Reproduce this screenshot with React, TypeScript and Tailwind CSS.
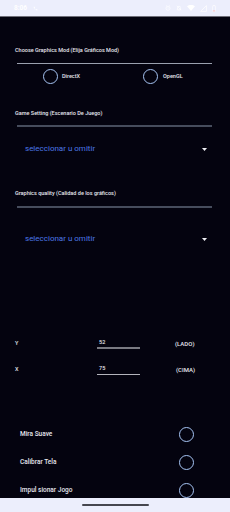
import React from "react";

const Circle = () => (
  <div className="w-[15px] h-[15px] rounded-full border-[1.5px] border-[#a6c4f4] shrink-0" />
);

const Heading = ({ children, mt }: { children: React.ReactNode; mt: string }) => (
  <div className={`${mt} pl-[15px] h-[8px] leading-[8px] text-[5.5px] font-medium text-[#e6e6ee]`}>{children}</div>
);

const Select = ({ mt }: { mt: string }) => (
  <div className={`${mt} h-[12px] flex items-center pl-[25px] pr-[23px] justify-between`}>
    <span className="text-[8px] leading-[12px] text-[#4c78e6]">seleccionar u omitir</span>
    <svg width="5" height="3" viewBox="0 0 5 3">
      <polygon points="0,0 5,0 2.5,3" fill="#f0f0f4" />
    </svg>
  </div>
);

export default function App() {
  return (
    <div
      className="w-[230px] h-[512px] flex flex-col overflow-hidden bg-[#04030f]"
      style={{ fontFamily: "Roboto, 'Noto Sans', sans-serif" }}
    >
      {/* status bar */}
      <div className="h-[17px] shrink-0 bg-[#eceefc] border-b border-[#6e6e78] flex items-center justify-between pl-[14px] pr-[14px]">
        <div className="flex items-center gap-[6px]">
          <span className="text-[6.5px] font-bold text-white leading-none">8:06</span>
          <svg width="5" height="5" viewBox="0 0 24 24">
            <path d="M6.6 10.8c1.4 2.8 3.8 5.1 6.6 6.6l2.2-2.2c.3-.3.7-.4 1-.2 1.1.4 2.3.6 3.6.6.6 0 1 .4 1 1V20c0 .6-.4 1-1 1C10.6 21 3 13.4 3 4c0-.6.4-1 1-1h3.5c.6 0 1 .4 1 1 0 1.3.2 2.5.6 3.6.1.3 0 .7-.2 1L6.6 10.8z" fill="#ffffff" />
          </svg>
        </div>
        <div className="flex items-center gap-[5px]">
          <svg width="6" height="6" viewBox="0 0 24 24" fill="none" stroke="#ffffff" strokeWidth="2.5">
            <circle cx="12" cy="13" r="8" />
            <path d="M12 9v4l2 2M4 4l3-2M20 4l-3-2" />
          </svg>
          <svg width="6" height="6" viewBox="0 0 24 24" fill="none" stroke="#ffffff" strokeWidth="2.5">
            <path d="M6 17V11a6 6 0 0 1 12 0v6l2 2H4zM10 21h4M3 3l18 18" />
          </svg>
          <svg width="8" height="6" viewBox="0 0 24 18">
            <path d="M12 18L0 4C3.5 1.5 7.5 0 12 0s8.5 1.5 12 4z" fill="#ffffff" />
          </svg>
          <svg width="7" height="7" viewBox="0 0 24 24" fill="none" stroke="#ffffff" strokeWidth="2.5">
            <path d="M22 2L2 22h20z" />
          </svg>
          <svg width="4" height="7" viewBox="0 0 10 18" fill="none">
            <rect x="1" y="2" width="8" height="15" rx="1" stroke="#ffffff" strokeWidth="1.5" />
            <rect x="3.5" y="0" width="3" height="2" fill="#ffffff" />
            <rect x="2" y="14" width="6" height="2.5" fill="#ffc0c0" />
          </svg>
        </div>
      </div>

      {/* content */}
      <div className="flex-1 flex flex-col overflow-hidden">
        <Heading mt="mt-[29px]">Choose Graphics Mod (Elija Gráficos Mod)</Heading>
        <div className="mt-[9px] ml-[17px] mr-[18px] h-[1px] bg-[#9aa0ae]" />

        <div className="mt-[5px] h-[15px] flex items-center pl-[43px]">
          <div className="w-[100px] flex items-center gap-[4px]">
            <Circle />
            <span className="text-[5.5px] font-medium text-[#e6e6ee]">DirectX</span>
          </div>
          <div className="flex items-center gap-[5px]">
            <Circle />
            <span className="text-[5.5px] font-medium text-[#e6e6ee]">OpenGL</span>
          </div>
        </div>

        <Heading mt="mt-[25px]">Game Setting (Escenario De Juego)</Heading>
        <div className="mt-[8px] ml-[17px] mr-[18px] h-[2px] bg-[#464c5c]" />
        <Select mt="mt-[16px]" />

        <Heading mt="mt-[34px]">Graphics quality (Calidad de los gráficos)</Heading>
        <div className="mt-[9px] ml-[17px] mr-[18px] h-[2px] bg-[#464c5c]" />
        <Select mt="mt-[25px]" />

        {/* Y row */}
        <div className="mt-[93px] h-[11px] flex items-center text-[5.5px] font-medium text-[#e6e6ee]">
          <span className="w-[97px] shrink-0 pl-[15px]">Y</span>
          <div className="w-[43px] shrink-0 h-[11px] border-b-2 border-[#7a7a82] pl-[2px] leading-[9px]">52</div>
          <span className="ml-[35px] text-[6px]">(LADO)</span>
        </div>
        {/* X row */}
        <div className="mt-[15px] h-[11px] flex items-center text-[5.5px] font-medium text-[#e6e6ee]">
          <span className="w-[97px] shrink-0 pl-[15px]">X</span>
          <div className="w-[43px] shrink-0 h-[11px] border-b border-[#b4b4bc] pl-[2px] leading-[9px]">75</div>
          <span className="ml-[36px] text-[6px]">(CIMA)</span>
        </div>

        {/* toggles */}
        <div className="mt-[52px] flex flex-col gap-[13px]">
          {["Mira Suave", "Calibrar Tela", "Impul sionar Jogo"].map((t) => (
            <div key={t} className="h-[15px] flex items-center justify-between pl-[20px] pr-[36px]">
              <span className="text-[6.5px] font-medium text-[#e6e6ee]">{t}</span>
              <Circle />
            </div>
          ))}
        </div>
      </div>

      {/* nav bar */}
      <div className="h-[14px] shrink-0 bg-[#eceefc] flex items-center justify-center">
        <div className="w-[67px] h-[2.5px] rounded-full bg-[#46464f]" />
      </div>
    </div>
  );
}
